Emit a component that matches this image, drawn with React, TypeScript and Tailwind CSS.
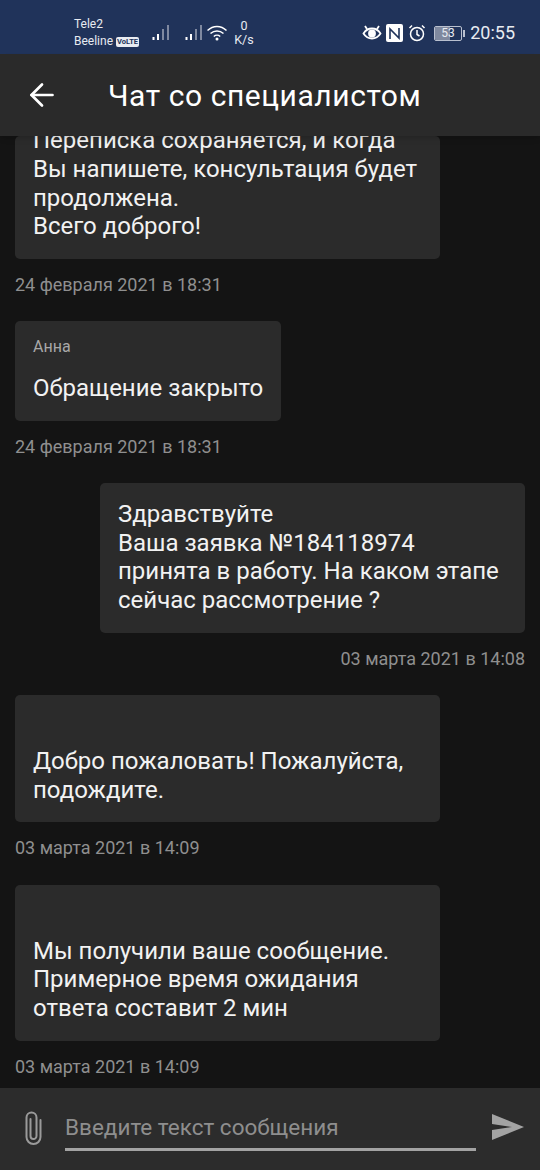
import { ArrowLeft } from "lucide-react";

type Msg = {
  lines: string[];
  date: string;
  mine?: boolean;
  sender?: string;
  spacer?: boolean;
};

const messages: Msg[] = [
  {
    lines: ["Вы напишете, консультация будет", "продолжена.", "Всего доброго!"],
    date: "24 февраля 2021 в 18:31",
  },
  { lines: ["Обращение закрыто"], date: "24 февраля 2021 в 18:31", sender: "Анна" },
  {
    lines: ["Здравствуйте", "Ваша заявка №184118974", "принята в работу. На каком этапе", "сейчас рассмотрение ?"],
    date: "03 марта 2021 в 14:08",
    mine: true,
  },
  { lines: ["Добро пожаловать! Пожалуйста,", "подождите."], date: "03 марта 2021 в 14:09", spacer: true },
  {
    lines: ["Мы получили ваше сообщение.", "Примерное время ожидания", "ответа составит 2 мин"],
    date: "03 марта 2021 в 14:09",
    spacer: true,
  },
];

function Signal() {
  return (
    <svg width="19" height="18" viewBox="0 0 19 18">
      <rect x="0.500" y="13" width="2" height="3" fill="#fff" />
      <rect x="5" y="10" width="2" height="6" fill="#fff" />
      <rect x="10" y="5" width="2" height="11" fill="#7f89a0" />
      <rect x="15" y="1" width="2" height="15" fill="#7f89a0" />
    </svg>
  );
}

function Wifi() {
  return (
    <svg width="22" height="18" viewBox="0 0 22 18" fill="none" stroke="#fff" strokeWidth="1.500">
      <path d="M0.500 6.500C6 1 14 1 19.500 6.500" />
      <path d="M3.500 9.500c3.800-3.500 9.200-3.500 13 0" />
      <path d="M6.800 12.500c1.800-1.600 4.600-1.600 6.400 0" />
      <circle cx="10" cy="15" r="1.500" fill="#fff" stroke="none" />
    </svg>
  );
}

function StatusBar() {
  return (
    <div className="flex h-[54px] shrink-0 items-center bg-[#20335a] pl-[74px] pr-[25px] pt-[12px] text-[#e8ebf1]">
      <div className="w-[78px] text-[12px] leading-[17px]">
        <div>Tele2</div>
        <div className="flex items-center gap-[3px]">
          Beeline
          <span className="rounded-[2px] bg-[#e8ebf1] px-[1px] text-[7.500px] font-bold leading-[10px] text-[#20335a]">VoLTE</span>
        </div>
      </div>
      <div className="flex items-center gap-[14px]">
        <Signal />
        <Signal />
      </div>
      <div className="ml-[3px]">
        <Wifi />
      </div>
      <div className="ml-[4px] w-[22px] text-center text-[12.500px] leading-[14px]">
        <div>0</div>
        <div>K/s</div>
      </div>
      <div className="ml-auto flex items-center">
        <svg width="20" height="18" viewBox="0 0 20 18" fill="none" stroke="#fff" strokeWidth="1.800">
          <path d="M1.500 9.500C4 5.500 7 4.500 10 4.500s6 1 8.500 5c-2.500 4-5.500 5-8.500 5s-6-1-8.500-5z" />
          <circle cx="10" cy="9.500" r="3" fill="#fff" />
          <path d="M3 2l2 3M17 2l-2 3" />
        </svg>
        <div className="ml-[4px] flex h-[18px] w-[17px] items-center justify-center rounded-[2px] bg-white">
          <svg width="11" height="13" viewBox="0 0 11 13" fill="none" stroke="#20335a" strokeWidth="1.600">
            <path d="M1 12V2l9 9V1" />
          </svg>
        </div>
        <svg className="ml-[5px]" width="18" height="18" viewBox="0 0 18 18" fill="none" stroke="#fff" strokeWidth="1.500">
          <circle cx="9" cy="10" r="6.500" />
          <path d="M9 6v4.500l2.500 1.500M1.500 4L4 1.500M16.500 4L14 1.500" />
        </svg>
        <div className="ml-[8px] flex items-center">
          <div className="relative flex h-[15px] w-[28px] items-center overflow-hidden rounded-[2px] border border-[#b9c0cf]">
            <div className="h-full w-[15px] bg-[#7f899f]" />
            <span className="absolute left-[6px] top-0 text-[12px] leading-[13px]">53</span>
          </div>
          <div className="ml-[1px] h-[7px] w-[2px] bg-[#b9c0cf]" />
        </div>
        <span className="ml-[5px] text-[18px] leading-none">20:55</span>
      </div>
    </div>
  );
}

function Bubble({ msg, first }: { msg: Msg; first?: boolean }) {
  return (
    <div className={msg.mine ? "flex flex-col items-end" : "flex flex-col items-start"}>
      <div
        className={[
          "rounded-[5px] bg-[#2b2b2b] px-[18px] pb-[18px] pt-[17px] text-[24px] leading-[28.600px] text-[#f2f2f2]",
          msg.sender ? "" : "w-[425px]",
        ].join(" ")}
      >
        {first && <div className="mt-[-26.700px]">Переписка сохраняется, и когда</div>}
        {msg.sender && <div className="mb-[18px] mt-[-1px] text-[16px] leading-[19px] text-[#a8a8a8]">{msg.sender}</div>}
        {msg.spacer && <div className="h-[35px]" />}
        {msg.lines.map((line) => (
          <div key={line} className="whitespace-nowrap">
            {line}
          </div>
        ))}
      </div>
      <div className="mt-[14px] text-[18px] leading-[24px] text-[#8f8f8f]">{msg.date}</div>
    </div>
  );
}

export default function App() {
  return (
    <div className="flex h-[1170px] w-[540px] flex-col overflow-hidden bg-[#141414] font-['Roboto',sans-serif]">
      <StatusBar />
      <div className="z-10 flex h-[82px] shrink-0 items-center bg-[#2a2a2a] pl-[24px] text-white shadow-md">
        <ArrowLeft size={36} strokeWidth={1.8} />
        <h1 className="ml-[48px] text-[30px] font-normal tracking-[0.560px]">Чат со специалистом</h1>
      </div>
      <main className="flex min-h-0 flex-1 flex-col gap-[24.500px] overflow-hidden px-[15px]">
        {messages.map((msg, i) => (
          <Bubble key={i} msg={msg} first={i === 0} />
        ))}
      </main>
      <footer className="flex h-[82px] shrink-0 items-start bg-[#2c2c2c] pl-[24px] pr-[14px]">
        {/* vertical paperclip, lucide's one is slanted */}
        <svg className="mt-[23px]" width="18" height="35" viewBox="0 0 18 35" fill="none" stroke="#9a9a9a" strokeWidth="2" strokeLinecap="round">
          <path d="M6.500 8v17a3 3 0 0 0 6 0V6.500a5 5 0 0 0-10 0V26a7 7 0 0 0 14 0V9" />
        </svg>
        <div className="ml-[23px] mt-[24px] w-[411px] border-b-[3px] border-[#a3a3a3] pb-[6px] text-[22.500px] leading-[30px] text-[#8e8e8e]">
          Введите текст сообщения
        </div>
        <svg className="ml-[15px] mt-[25px]" width="34" height="28" viewBox="0 0 34 28">
          <path d="M1 1l32 13L1 27v-10l20-3-20-3z" fill="#a3a3a3" />
        </svg>
      </footer>
    </div>
  );
}
